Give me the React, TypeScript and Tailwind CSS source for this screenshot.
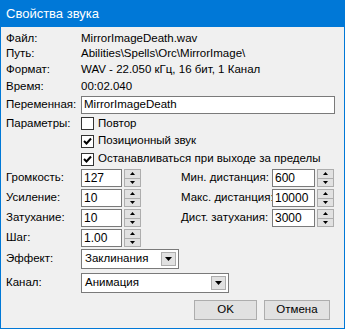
import React from 'react';

const font = { fontFamily: '"Liberation Sans", Arial, sans-serif' };

function Spin() {
  return (
    <div className="flex flex-col w-[17px] h-[18px] ml-[2px]">
      <div className="flex-1 flex items-center justify-center bg-[#e1e1e1] border border-[#adadad]">
        <svg width="5" height="3" viewBox="0 0 5 3"><path d="M2.5 0 L5 3 L0 3 Z" fill="#000" /></svg>
      </div>
      <div className="flex-1 flex items-center justify-center bg-[#e1e1e1] border border-t-0 border-[#adadad]">
        <svg width="5" height="3" viewBox="0 0 5 3"><path d="M0 0 L5 0 L2.5 3 Z" fill="#000" /></svg>
      </div>
    </div>
  );
}

function SpinField({ value, width = 41 }: { value: string; width?: number }) {
  return (
    <div className="flex items-center">
      <div
        className="h-[18px] bg-white border border-[#7a7a7a] flex items-center pl-[2px] text-[12px] leading-none"
        style={{ width }}
      >
        {value}
      </div>
      <Spin />
    </div>
  );
}

function Check({ checked, label }: { checked?: boolean; label: string }) {
  return (
    <div className="flex items-center">
      <div className="w-[13px] h-[13px] bg-white border border-[#333] flex items-center justify-center">
        {checked && (
          <svg width="9" height="9" viewBox="0 0 9 9">
            <path d="M1 4 L3.5 6.5 L8 1.5" stroke="#000" strokeWidth="2" fill="none" />
          </svg>
        )}
      </div>
      <span className="ml-[4px]">{label}</span>
    </div>
  );
}

function Combo({ value, width }: { value: string; width: number }) {
  return (
    <div className="h-[20px] bg-white border border-[#7a7a7a] flex items-center justify-between pl-[3px] pr-[2px]" style={{ width }}>
      <span>{value}</span>
      <div className="w-[15px] h-[14px] bg-[#e1e1e1] border border-[#adadad] flex items-center justify-center">
        <svg width="7" height="4" viewBox="0 0 7 4"><path d="M0 0 L7 0 L3.5 4 Z" fill="#000" /></svg>
      </div>
    </div>
  );
}

export default function App() {
  const info = [
    ['Файл:', 'MirrorImageDeath.wav', 'mt-[4px] h-[15px]'],
    ['Путь:', 'Abilities\\Spells\\Orc\\MirrorImage\\', 'h-[15px]'],
    ['Формат:', 'WAV - 22.050 кГц, 16 бит, 1 Канал', 'mt-[1px] h-[16px]'],
    ['Время:', '00:02.040', 'mt-[1px] h-[16px]'],
  ];
  const spins = [
    ['Громкость:', '127', 'Мин. дистанция:', '600'],
    ['Усиление:', '10', 'Макс. дистанция:', '10000'],
    ['Затухание:', '10', 'Дист. затухания:', '3000'],
    ['Шаг:', '1.00', '', ''],
  ];
  return (
    <div className="w-[345px] h-[329px] bg-[#0078d7] flex flex-col px-[1px] pb-[1px] text-[11.5px] text-black" style={font}>
      <div className="h-[27px] flex items-center pl-[5px] text-white text-[13px]">Свойства звука</div>
      <div className="flex-1 bg-[#f0f0f0] pl-[5px] flex flex-col">
        {info.map(([l, v, c]) => (
          <div key={l} className={`flex items-center ${c}`}>
            <span className="w-[75px]">{l}</span>
            <span>{v}</span>
          </div>
        ))}
        <div className="flex items-center h-[18px] mt-[1px]">
          <span className="w-[75px]">Переменная:</span>
          <div className="w-[254px] h-[18px] bg-white border border-[#7a7a7a] flex items-center pl-[2px]">MirrorImageDeath</div>
        </div>
        <div className="flex items-center h-[17px] mt-[1px]">
          <span className="w-[75px]">Параметры:</span>
          <Check label="Повтор" />
        </div>
        <div className="flex items-center h-[18px] pl-[75px]">
          <Check checked label="Позиционный звук" />
        </div>
        <div className="flex items-center h-[18px] pl-[75px]">
          <Check checked label="Останавливаться при выходе за пределы" />
        </div>
        {spins.map(([l, v, r, rv]) => (
          <div key={l} className="flex items-center h-[20px]">
            <span className="w-[75px]">{l}</span>
            <SpinField value={v} />
            {r && (
              <>
                <span className="w-[91px] ml-[40px] whitespace-nowrap">{r}</span>
                <SpinField value={rv} width={43} />
              </>
            )}
          </div>
        ))}
        <div className="flex items-center h-[20px] mt-[1px]">
          <span className="w-[75px]">Эффект:</span>
          <Combo value="Заклинания" width={98} />
        </div>
        <div className="flex items-center h-[20px] mt-[4px]">
          <span className="w-[75px]">Канал:</span>
          <Combo value="Анимация" width={148} />
        </div>
        <div className="flex justify-end mt-[7px] pr-[14px] gap-[7px]">
          <button className="w-[63px] h-[20px] bg-[#e1e1e1] border border-[#adadad] flex items-center justify-center">OK</button>
          <button className="w-[66px] h-[20px] bg-[#e1e1e1] border border-[#adadad] flex items-center justify-center">Отмена</button>
        </div>
      </div>
    </div>
  );
}
